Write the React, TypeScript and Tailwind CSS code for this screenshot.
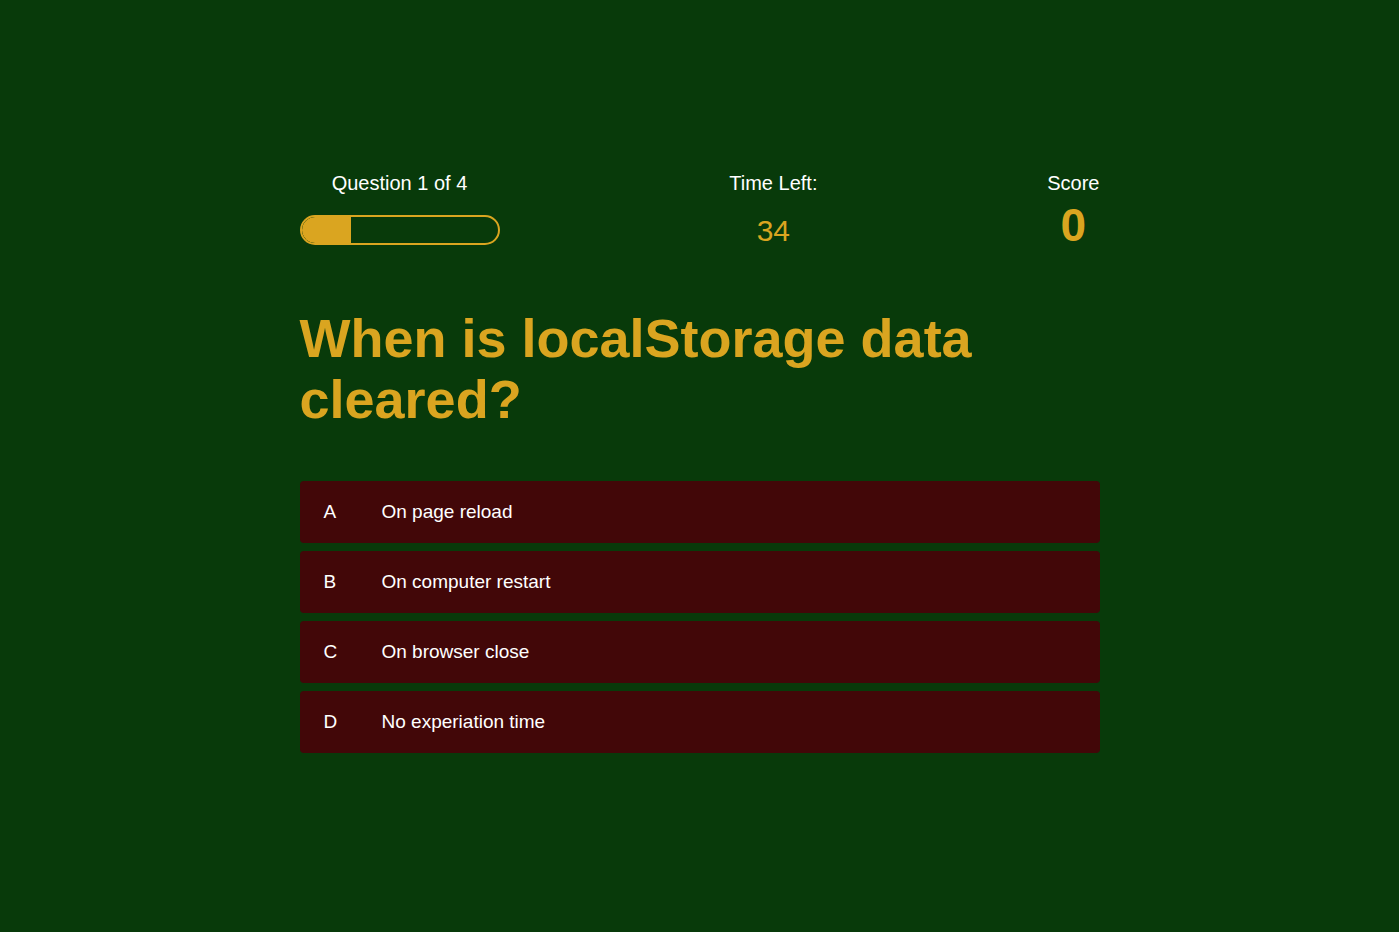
import React from "react";

const options = [
  { letter: "A", text: "On page reload" },
  { letter: "B", text: "On computer restart" },
  { letter: "C", text: "On browser close" },
  { letter: "D", text: "No experiation time" },
];

export default function App() {
  const current = 1;
  const total = 4;

  return (
    <div
      className="min-h-screen bg-[#083a0a] text-white"
      style={{ fontFamily: '"Liberation Sans", Arial, sans-serif' }}
    >
      <div className="w-[800px] mx-auto pt-[169px]">
        {/* Header: progress, timer, score */}
        <div className="flex justify-between items-start">
          <div className="w-[200px] flex flex-col items-center">
            <p className="text-[20px] leading-[28px]">
              Question {current} of {total}
            </p>
            <div className="mt-[18px] w-full h-[30px] rounded-full border-2 border-[#daa520] overflow-hidden">
              <div
                className="h-full bg-[#daa520] rounded-l-full"
                style={{ width: `${(current / total) * 100}%` }}
              ></div>
            </div>
          </div>

          <div className="flex flex-col items-center">
            <p className="text-[20px] leading-[28px]">Time Left:</p>
            <p className="mt-[16px] text-[30px] leading-[36px] text-[#daa520]">34</p>
          </div>

          <div className="flex flex-col items-center">
            <p className="text-[20px] leading-[28px]">Score</p>
            <p className="mt-[3px] text-[46px] leading-[50px] font-bold text-[#daa520]">0</p>
          </div>
        </div>

        {/* Question */}
        <h1 className="mt-[58px] text-[54px] leading-[61px] font-bold text-[#daa520]">
          When is localStorage data cleared?
        </h1>

        {/* Options */}
        <div className="mt-[51px] flex flex-col gap-2">
          {options.map((o) => (
            <button
              key={o.letter}
              className="h-[62px] w-full rounded bg-[#420708] flex items-center px-6 text-[19px] text-white text-left"
            >
              <span className="w-[58px]">{o.letter}</span>
              <span>{o.text}</span>
            </button>
          ))}
        </div>
      </div>
    </div>
  );
}
